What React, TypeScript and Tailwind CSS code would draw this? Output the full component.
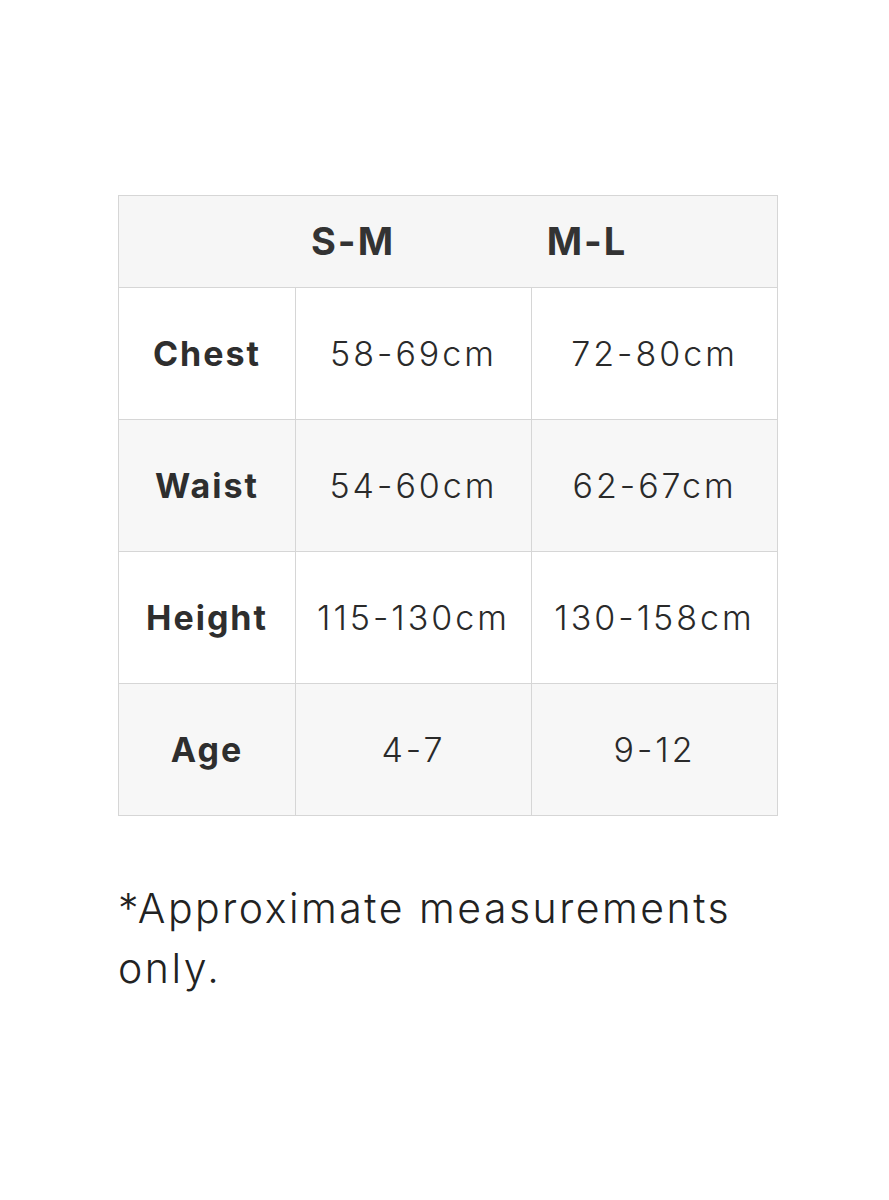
const ROWS = [
  { label: 'Chest', sm: '58-69cm', ml: '72-80cm', shade: false },
  { label: 'Waist', sm: '54-60cm', ml: '62-67cm', shade: true },
  { label: 'Height', sm: '115-130cm', ml: '130-158cm', shade: false },
  { label: 'Age', sm: '4-7', ml: '9-12', shade: true },
]

export default function App() {
  return (
    <div
      className="min-h-[1200px] w-full bg-white pt-[195px] text-[#2a2a2a]"
      style={{ fontFamily: 'Inter, "Noto Sans", sans-serif' }}
    >
      <div className="ml-[118px] w-[660px] border border-[#d6d6d6]">
        {/* size header */}
        <div className="flex h-[91px] items-center bg-[#f6f6f6] pl-[182px] text-[38px] font-bold tracking-[2px] text-[#333]">
          <span className="w-[104px] text-center">S-M</span>
          <span className="ml-[130px] w-[104px] text-center">M-L</span>
        </div>
        {ROWS.map((r) => (
          <div
            key={r.label}
            className={`grid h-[132px] grid-cols-[177px_236px_245px] border-t border-[#d6d6d6] ${
              r.shade ? 'bg-[#f7f7f7]' : 'bg-white'
            }`}
          >
            <div className="flex items-center justify-center border-r border-[#d6d6d6] text-[34px] font-bold tracking-[2px] text-[#2e2e2e]">
              {r.label}
            </div>
            <div className="flex items-center justify-center border-r border-[#d6d6d6] text-[34px] font-light tracking-[3px]">
              {r.sm}
            </div>
            <div className="flex items-center justify-center text-[34px] font-light tracking-[3px]">
              {r.ml}
            </div>
          </div>
        ))}
      </div>
      <p className="ml-[118px] mt-[62px] w-[660px] text-[41px] font-light leading-[60px] tracking-[2.5px] text-[#222]">
        *Approximate measurements only.
      </p>
    </div>
  )
}
